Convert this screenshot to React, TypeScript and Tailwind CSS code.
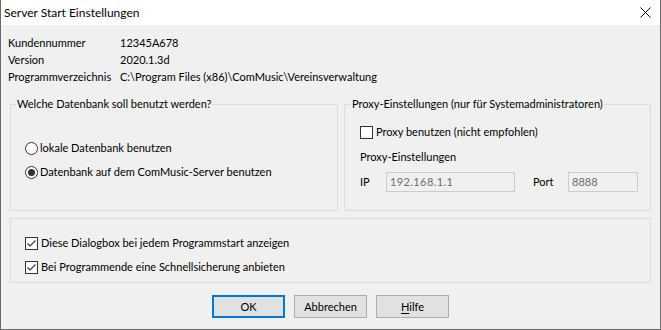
import React, { useState } from 'react';

const Radio: React.FC<{ checked: boolean; onClick: () => void; label: string }> = ({ checked, onClick, label }) => (
  <div className="flex items-center h-[16px] cursor-default" onClick={onClick}>
    <span className="w-[13px] h-[13px] rounded-full border border-[#333333] bg-white flex items-center justify-center">
      {checked && <span className="w-[7px] h-[7px] rounded-full bg-[#333333]" />}
    </span>
    <span className="ml-[2px]">{label}</span>
  </div>
);

const Check: React.FC<{ checked: boolean; onClick: () => void; label: string }> = ({ checked, onClick, label }) => (
  <div className="flex items-center h-[16px] cursor-default" onClick={onClick}>
    <span className="w-[13px] h-[13px] border border-[#333333] bg-white flex items-center justify-center">
      {checked && (
        <svg width="11" height="11" viewBox="0 0 11 11">
          <path d="M1.5 5.5 L4 8 L9.5 2.5" fill="none" stroke="#333333" strokeWidth="1.1" />
        </svg>
      )}
    </span>
    <span className="ml-[3px]">{label}</span>
  </div>
);

const App: React.FC = () => {
  const [useServer, setUseServer] = useState(true);
  const [proxy, setProxy] = useState(false);
  const [showDialog, setShowDialog] = useState(true);
  const [backup, setBackup] = useState(true);

  return (
    <div className="w-[661px] h-[330px] flex flex-col border-x border-b border-[#6a6a6a] bg-[#f0f0f0] text-[11px] leading-[16px] text-black font-['Lato','Noto_Sans',sans-serif]">
      {/* Title bar */}
      <div className="h-[25px] bg-white flex items-center justify-between pl-[3px] pr-[9px] shrink-0 text-[12px]">
        <span className="pt-[1px]">Server Start Einstellungen</span>
        <svg width="11" height="11" viewBox="0 0 11 11">
          <path d="M0.5 0.5 L10.5 10.5 M10.5 0.5 L0.5 10.5" stroke="#000" strokeWidth="1" />
        </svg>
      </div>

      {/* Info */}
      <div className="pl-[7px] pt-[9px]">
        <div className="flex h-[17px] items-center">
          <span className="w-[112px]">Kundennummer</span>
          <span>12345A678</span>
        </div>
        <div className="flex h-[17px] items-center">
          <span className="w-[112px]">Version</span>
          <span>2020.1.3d</span>
        </div>
        <div className="flex h-[17px] items-center">
          <span className="w-[112px]">Programmverzeichnis</span>
          <span>C:\Program Files (x86)\ComMusic\Vereinsverwaltung</span>
        </div>
      </div>

      {/* Groups */}
      <div className="flex gap-[6px] ml-[9px] mr-[9px] mt-[19px]">
        <div className="w-[328px] h-[107px] border border-[#dcdcdc] flex flex-col">
          <span className="self-start -mt-[9px] ml-[5px] px-[1px] bg-[#f0f0f0]">Welche Datenbank soll benutzt werden?</span>
          <div className="pl-[14px] mt-[28px]">
            <Radio checked={!useServer} onClick={() => setUseServer(false)} label="lokale Datenbank benutzen" />
            <div className="mt-[8px]">
              <Radio checked={useServer} onClick={() => setUseServer(true)} label="Datenbank auf dem ComMusic-Server benutzen" />
            </div>
          </div>
        </div>

        <div className="flex-1 h-[107px] border border-[#dcdcdc] flex flex-col">
          <span className="self-start -mt-[9px] ml-[6px] px-[1px] bg-[#f0f0f0]">Proxy-Einstellungen (nur für Systemadministratoren)</span>
          <div className="pl-[15px] mt-[12px]">
            <Check checked={proxy} onClick={() => setProxy(!proxy)} label="Proxy benutzen (nicht empfohlen)" />
            <div className="mt-[9px]">Proxy-Einstellungen</div>
            <div className="flex items-center mt-[7px]">
              <span className="w-[26px]">IP</span>
              <div className="w-[129px] h-[20px] border border-[#cccccc] bg-[#f0f0f0] text-[#6d6d6d] flex items-center pl-[3px] tracking-[0.4px]">192.168.1.1</div>
              <span className="ml-[18px] w-[35px]">Port</span>
              <div className="w-[70px] h-[20px] border border-[#cccccc] bg-[#f0f0f0] text-[#6d6d6d] flex items-center pl-[3px]">8888</div>
            </div>
          </div>
        </div>
      </div>

      <div className="ml-[9px] mr-[9px] mt-[7px] h-[65px] border border-[#dcdcdc] pl-[14px] pt-[16px]">
        <Check checked={showDialog} onClick={() => setShowDialog(!showDialog)} label="Diese Dialogbox bei jedem Programmstart anzeigen" />
        <div className="mt-[8px]">
          <Check checked={backup} onClick={() => setBackup(!backup)} label="Bei Programmende eine Schnellsicherung anbieten" />
        </div>
      </div>

      {/* Buttons */}
      <div className="flex justify-center gap-[9px] mt-[12px]">
        <button className="w-[73px] h-[23px] border-2 border-[#0078d7] bg-[#e1e1e1]">OK</button>
        <button className="w-[73px] h-[23px] border border-[#adadad] bg-[#e1e1e1]">Abbrechen</button>
        <button className="w-[73px] h-[23px] border border-[#adadad] bg-[#e1e1e1]">
          <span className="underline underline-offset-2">H</span>ilfe
        </button>
      </div>
    </div>
  );
};

export default App;
